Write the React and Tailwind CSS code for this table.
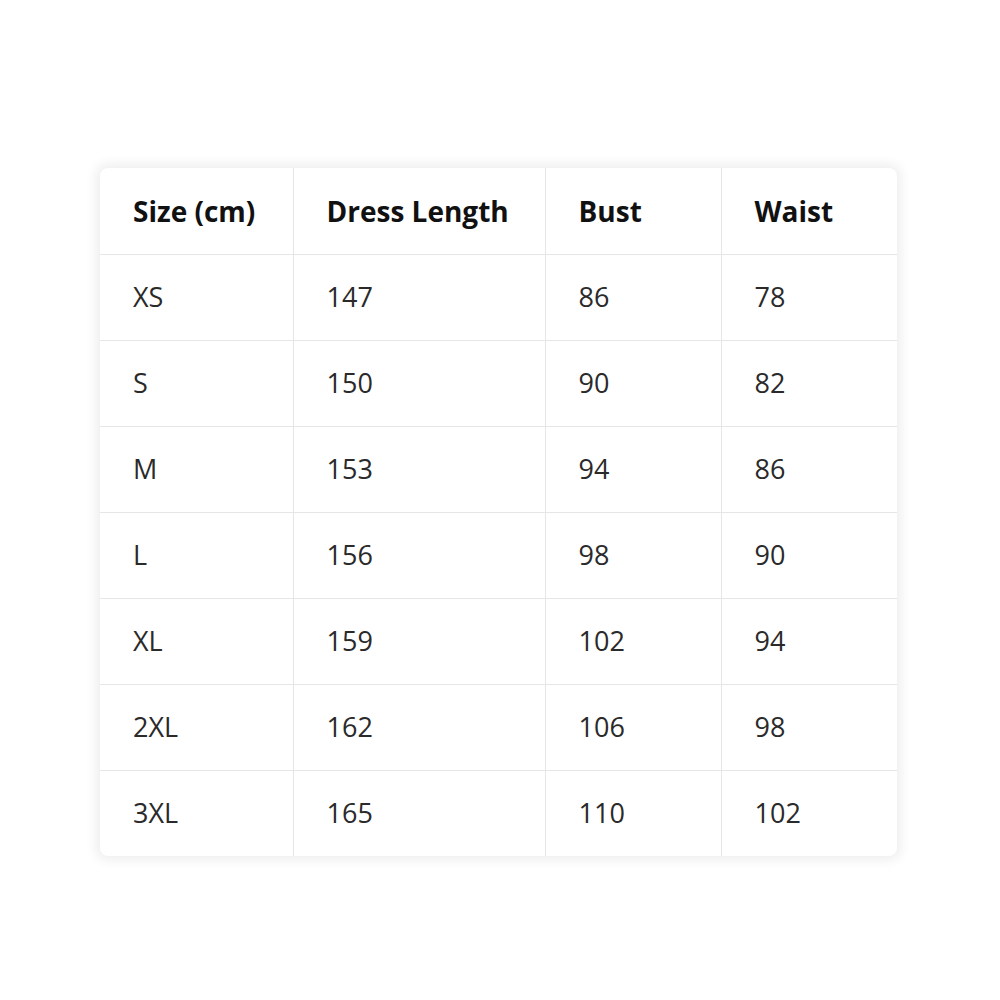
const headers = ["Size (cm)", "Dress Length", "Bust", "Waist"];

const rows = [
  ["XS", "147", "86", "78"],
  ["S", "150", "90", "82"],
  ["M", "153", "94", "86"],
  ["L", "156", "98", "90"],
  ["XL", "159", "102", "94"],
  ["2XL", "162", "106", "98"],
  ["3XL", "165", "110", "102"],
];

const widths = ["w-[193px]", "w-[252px]", "w-[176px]", "w-[176px]"];

export default function App() {
  return (
    <div className="min-h-screen bg-white pt-[168px] pl-[100px] font-['Open_Sans',sans-serif]">
      <div className="w-[797px] rounded-lg bg-white shadow-[0_0_12px_4px_rgba(0,0,0,0.07)] overflow-hidden">
        <table className="w-full table-fixed border-collapse">
          <thead>
            <tr className="h-[86px]">
              {headers.map((h, i) => (
                <th
                  key={h}
                  className={`${widths[i]} border-b border-[#e6e6e6] ${
                    i > 0 ? "border-l" : ""
                  } pl-[33px] text-left text-[28px] font-bold text-[#111]`}
                >
                  {h}
                </th>
              ))}
            </tr>
          </thead>
          <tbody>
            {rows.map((row, r) => (
              <tr key={row[0]} className={`h-[86px] ${r < rows.length - 1 ? "border-b border-[#e6e6e6]" : ""}`}>
                {row.map((cell, i) => (
                  <td
                    key={i}
                    className={`${i > 0 ? "border-l border-[#e6e6e6]" : ""} pl-[33px] text-[27px] text-[#2a2a2a]`}
                  >
                    {cell}
                  </td>
                ))}
              </tr>
            ))}
          </tbody>
        </table>
      </div>
    </div>
  );
}
